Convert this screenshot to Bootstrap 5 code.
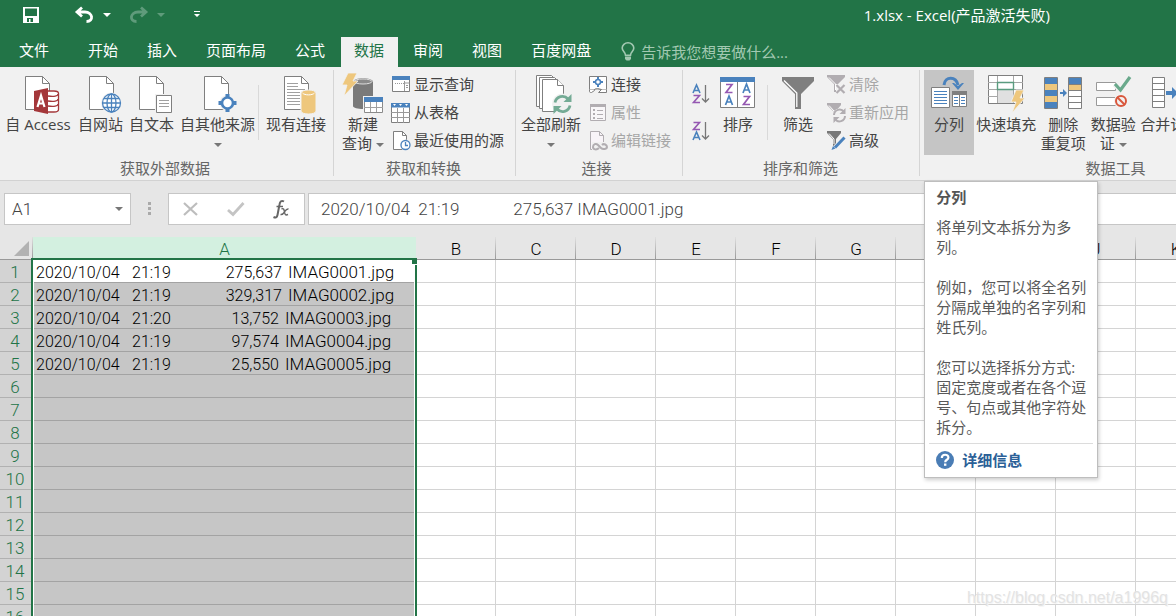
<!DOCTYPE html>
<html lang="zh-CN">
<head>
<meta charset="utf-8">
<meta name="viewport" content="width=device-width, initial-scale=1">
<title>1.xlsx - Excel</title>
<link href="https://cdn.jsdelivr.net/npm/bootstrap@5.3.0/dist/css/bootstrap.min.css" rel="stylesheet">
<style>
  :root { --xl-green:#227447; --xl-cells:Roboto,"Noto Sans CJK SC",sans-serif; }
  body { font-family:"Open Sans","Noto Sans CJK SC",sans-serif; font-size:15px; line-height:20px; color:#444; background:#fff; }
  button { border:0; background:none; padding:0; color:inherit; white-space:nowrap; }
  svg { display:block; flex:none; overflow:visible; }
  .tri { display:inline-block; border:solid transparent; border-width:4px 4px 0; border-top-color:currentColor; height:0; width:0; }

  /* title bar and tabs */
  .xl-head { background:var(--xl-green); color:#fff; }
  .title-row { height:30px; padding:0 126px 0 22px; }
  .title-row .dim { color:#5f9b7b; }
  .qat-undo { margin-left:35px; }
  .qat-list { margin-left:9px; }
  .qat-redo { margin-left:18px; }
  .qat-more { margin-left:28px; }
  .tab-row { height:37px; gap:2px; }
  .xl-tab { display:block; height:30px; line-height:27px; padding:0 14px 0 13px; color:#fff; text-decoration:none; white-space:nowrap; }
  .xl-tab.file { padding:0 24px 0 19px; }
  .xl-tab.active { background:#f1f1f1; color:var(--xl-green); }
  .tell { margin-left:14px; gap:6px; height:30px; padding-bottom:1px; color:#a3c9b2; }
  .tell input { border:0; background:none; padding:0; width:180px; line-height:20px; outline:0; color:#fff; }
  .tell input::placeholder { color:#a3c9b2; opacity:1; }

  /* ribbon */
  .ribbon { background:#f1f1f1; padding:3px 0 4px; border-bottom:1px solid #d2d2d2; }
  .rgroup { border-right:1px solid #d5d5d5; flex:none; }
  .rbody { height:85px; }
  .rlabel { height:21px; line-height:26px; text-align:center; color:#666; }
  .g-data { padding:0 4px 0 1px; }
  .g-get { padding:0 7px 0 5px; }
  .g-conn { padding:0 7px 0 2px; }
  .g-sort { padding:0 6px 0 5px; }
  .g-tools { padding-left:4px; min-width:388px; }
  .big { display:flex; flex-direction:column; align-items:center; min-width:48px; height:85px; padding:4px 3px 0; line-height:19px; }
  .big svg { margin-bottom:-1px; }
  .big.wide { min-width:74px; }
  .g-tools .big { padding:4px 2px 0; min-width:50px; }
  .big .tri { color:#777; vertical-align:middle; }
  .big.on { background:#c5c5c5; }
  .rsep { width:1px; height:55px; margin-top:15px; background:#d9d9d9; }
  .g-sort .rsep { margin-left:5px; margin-right:6px; }
  .small-col { padding-top:1px; }
  .sbtn { display:flex; align-items:center; height:28px; gap:3px; padding:0 4px 2px; }
  .sbtn svg { margin-top:2px; }
  .sbtn:disabled { color:#a6a6a6; }
  .az-col { padding-top:5px; }
  .az { display:flex; align-items:center; height:37px; padding:0 3px; }

  /* tooltip */
  .tip { position:absolute; z-index:5; top:111px; left:0; width:174px; background:#fff; border:1px solid #bebebe; box-shadow:1px 2px 4px rgba(0,0,0,.2); color:#595959; }
  .tip-text { padding:5px 9px 6px 11px; }
  .tip-text h2 { font-size:15px; line-height:20px; font-weight:700; margin:0 0 10px; color:#555; }
  .tip-text p { margin:0 0 20px; white-space:nowrap; }
  .tip-text p:last-child { margin:0; }
  .tip-more { margin:0 4px; padding:6px 7px 7px; border-top:1px solid #dcdcdc; gap:8px; font-weight:700; color:#2b6097; text-decoration:none; }

  /* formula bar */
  .fbar { background:#e6e6e6; padding:12px 0 12px 4px; font-family:var(--xl-cells); font-size:17px; }
  .fbox { height:32px; background:#fff; border:1px solid #c6c6c6; }
  .fbox input { border:0; background:none; padding:0; outline:0; color:#444; line-height:20px; min-width:0; width:100%; font-weight:300; }
  .namebox { width:127px; padding:0 7px; color:#777; }
  .dots { width:37px; color:#aaa; }
  .fbtns { width:137px; margin-right:3px; padding:0 14px; }

  /* grid */
  .sheet { position:relative; overflow:hidden; min-height:0; background:#fff; }
  .cells { table-layout:fixed; border-collapse:separate; border-spacing:0; font-family:var(--xl-cells); font-size:17px; font-weight:300; color:#000; }
  .cells th, .cells td { height:23px; line-height:20px; padding:2px 0 0; border:solid #d4d4d4; border-width:0 1px 1px 0; font-weight:300; overflow:hidden; white-space:nowrap; }
  .cells thead th { background:linear-gradient(#e0e0e0,#999) right/1px 100% no-repeat #e6e6e6; border-right:0; border-bottom-color:#999; text-align:center; }
  .cells thead th.sel { background:#d3f0e0; color:var(--xl-green); }
  .cells tbody th { background:#d3d3d3; border-color:#b1b1b1; color:var(--xl-green); text-align:center; padding-right:2px; }
  .cells td.sel { background:#c6c6c6; border-color:#a3a3a3; padding-left:3px; color:#000; }
  .cells tr:first-child td.sel { background:#fff; }
  .c-rn { width:33px; } .c-a { width:383px; } .c-n { width:80px; }
  .f-date, .f-time, .f-size { display:inline-block; font-size:16px; line-height:18px; }
  .f-date { width:96px; }
  .f-time { width:40px; }
  .f-size { width:110px; text-align:right; margin-right:6px; }
  .f-size.five { width:107px; }
  .range { position:absolute; top:21px; left:31px; width:386px; bottom:-4px; border:2px solid var(--xl-green); box-shadow:inset 0 0 0 1px #fff; pointer-events:none; }
  .range::after { content:""; position:absolute; top:-2px; right:-2px; width:5px; height:6px; background:var(--xl-green); box-shadow:0 1px 0 #fff; }
  .mark-url { position:absolute; right:8px; bottom:8px; font:16px/20px "Liberation Sans",sans-serif; color:#e3e3e3; text-shadow:1px 1px 0 #f6f6f6; pointer-events:none; }
</style>
</head>
<body class="vh-100 overflow-hidden d-flex flex-column">

<header class="xl-head">
  <div class="title-row d-flex align-items-center">
    <button aria-label="保存"><svg width="18" height="18" viewBox="0 0 18 18"><path fill="#fff" fill-rule="evenodd" d="M1 1h16v16H1zM3 2.500h12v7.500H3zM5 12v4h2v-3h1.500v3H11v-4z"/></svg></button>
    <button class="qat-undo" aria-label="撤消"><svg width="19" height="18" viewBox="0 0 19 18"><path fill="none" stroke="#fff" stroke-width="2.800" d="M7 1.500 2 6l5 4.500M2.500 6H10c8 0 9 9.500 1.500 9.500"/></svg></button>
    <button class="qat-list d-flex" aria-label="撤消列表"><span class="tri"></span></button>
    <button class="qat-redo dim" aria-label="重做"><svg width="19" height="18" viewBox="0 0 19 18"><path fill="none" stroke="currentColor" stroke-width="2.800" d="m12 1.500 5 4.500-5 4.500M16.500 6H9C1 6 0 15.500 7.500 15.500"/></svg></button>
    <button class="qat-list dim d-flex" aria-label="重做列表"><span class="tri"></span></button>
    <button class="qat-more" aria-label="自定义快速访问工具栏"><svg width="8" height="8" viewBox="0 0 8 8"><path fill="#fff" d="M1 0h6v1H1zM1 3h6L4 6z"/></svg></button>
    <div class="ms-auto text-nowrap">1.xlsx - Excel(产品激活失败)</div>
  </div>
  <nav class="tab-row d-flex align-items-end">
    <a class="xl-tab file" href="#">文件</a>
    <a class="xl-tab" href="#">开始</a>
    <a class="xl-tab" href="#">插入</a>
    <a class="xl-tab" href="#">页面布局</a>
    <a class="xl-tab" href="#">公式</a>
    <a class="xl-tab active" href="#" aria-current="page">数据</a>
    <a class="xl-tab" href="#">审阅</a>
    <a class="xl-tab" href="#">视图</a>
    <a class="xl-tab" href="#">百度网盘</a>
    <label class="tell d-flex align-items-center">
      <svg width="14" height="19" viewBox="0 0 14 19"><path fill="none" stroke="currentColor" stroke-width="1.600" d="M4.500 13.200C4.500 10 1.200 9.500 1.200 6a5.800 5.200 0 0 1 11.600 0c0 3.500-3.300 4-3.300 7.200z"/><path fill="currentColor" d="M4 14.500h6V17l-1.500 1.500h-3L4 17z"/></svg>
      <input type="text" placeholder="告诉我您想要做什么..." aria-label="告诉我您想要做什么">
    </label>
  </nav>
</header>

<section class="ribbon d-flex">
  <div class="rgroup g-data">
    <div class="rbody d-flex">
      <button class="big wide">
        <svg width="42" height="42"><path d="M8.500 2.500h17l7 7v26h-24z" fill="#fff" stroke="#7f7f7f"/><path d="M25.500 2.500v7h7" fill="none" stroke="#7f7f7f"/><path d="M30 17h7c3 0 4.500 1 4.500 2.500v16c0 1.500-2 2.500-4.500 2.500h-7z" fill="#fff" stroke="#a4373a" stroke-width="1.300"/><path d="M31 22c6 1 10 0 10-2M31 27c6 1 10 0 10-2M31 32c6 1 10 0 10-2" fill="none" stroke="#a4373a" stroke-width="1.300"/><path d="M17 17l14-3v26l-14-3z" fill="#a4373a"/><path d="M20.500 33 24 21.500l3.500 11.500M21.700 29.500h4.600" fill="none" stroke="#fff" stroke-width="2.200"/></svg>
        <span>自 Access</span>
      </button>
      <button class="big">
        <svg width="42" height="42"><path d="M9.500 2.500h17l7 7v26h-24z" fill="#fff" stroke="#7f7f7f"/><path d="M26.500 2.500v7h7" fill="none" stroke="#7f7f7f"/><circle cx="31.500" cy="29" r="10.500" fill="#f1f1f1"/><g fill="#fff" stroke="#4a82bd" stroke-width="1.300"><circle cx="31.500" cy="29" r="9"/><ellipse cx="31.500" cy="29" rx="4.500" ry="9"/><path d="M31.500 20v18M22.500 29h18M24 24.500h15M24 33.500h15"/></g></svg>
        <span>自网站</span>
      </button>
      <button class="big">
        <svg width="42" height="42"><path d="M8.500 2.500h17l7 7v26h-24z" fill="#fff" stroke="#7f7f7f"/><path d="M25.500 2.500v7h7" fill="none" stroke="#7f7f7f"/><path d="M24 20h17v20H24z" fill="#f1f1f1"/><path d="M25.500 21.500h15v17h-15z" fill="#fff" stroke="#7f7f7f"/><path d="M28 26.500h10M28 29.500h10M28 32.500h10" stroke="#a0a0a0"/></svg>
        <span>自文本</span>
      </button>
      <button class="big">
        <svg width="42" height="42"><path d="M7.500 2.500h17l7 7v26h-24z" fill="#fff" stroke="#7f7f7f"/><path d="M24.500 2.500v7h7" fill="none" stroke="#7f7f7f"/><circle cx="30.500" cy="29" r="8" fill="#f1f1f1"/><circle cx="30.500" cy="29" r="5.500" fill="#fff" stroke="#4a82bd" stroke-width="2.600"/><path d="M28.500 20h4v4h-4zM28.500 34h4v4h-4zM21.500 27h4v4h-4zM35.500 27h4v4h-4z" fill="#4a82bd"/></svg>
        <span>自其他来源</span><span><i class="tri"></i></span>
      </button>
      <div class="rsep me-1"></div>
      <button class="big">
        <svg width="42" height="42"><path d="M9.500 2.500h17l7 7v26h-24z" fill="#fff" stroke="#7f7f7f"/><path d="M26.500 2.500v7h7" fill="none" stroke="#7f7f7f"/><path d="M12 9.500h11M12 12.500h11M12 15.500h18M12 18.500h13M12 21.500h13M12 24.500h13M12 27.500h13M12 30.500h13" stroke="#a0a0a0"/><path d="M26 19c0-4 15-4 15 0v18c0 4-15 4-15 0z" fill="#eec77d" stroke="#f1f1f1" stroke-width="1"/><path d="M27.500 19c2 2.500 10 2.500 12 0" fill="none" stroke="#fff"/></svg>
        <span>现有连接</span>
      </button>
    </div>
    <div class="rlabel">获取外部数据</div>
  </div>

  <div class="rgroup g-get">
    <div class="rbody d-flex">
      <button class="big">
        <svg width="42" height="42"><path d="M11 8c0-5 20-5 20 0v24c0 4-20 4-20 0z" fill="#7a7a7a"/><ellipse cx="21" cy="7.500" rx="9" ry="2.500" fill="#8a8a8a" stroke="#ddd"/><path d="M6-1h9l-4 8h5L2 22l3-11H0z" fill="#eec77d" stroke="#f1f1f1" stroke-width=".8"/><path d="M21 22h21v18H21z" fill="#f1f1f1"/><path d="M22.500 23.500h18v15h-18z" fill="#fff" stroke="#8a8a8a"/><path d="M22 23h19v5H22z" fill="#4a82bd"/><path d="M22 33.500h19M28.500 28v10M34.500 28v10" stroke="#a0a0a0"/></svg>
        <span>新建<br>查询 <i class="tri"></i></span>
      </button>
      <div class="small-col">
        <button class="sbtn"><svg width="20" height="20"><path d="M1.500 2.500h17v14h-17z" fill="#fff" stroke="#7f7f7f"/><path d="M1 1h18v4H1z" fill="#4a82bd"/><path d="M4 8.500h9" stroke="#999" stroke-dasharray="1 1"/><path d="M13.500 8h5M13.500 6v10" stroke="#999"/><path d="M15 10h2v1h-2zM15 12h2v1h-2z" fill="#999"/></svg>显示查询</button>
        <button class="sbtn"><svg width="20" height="20"><path d="M.5 2.500h18v17H.5z" fill="#fff" stroke="#7f7f7f"/><path d="M0 0h19v4.500H0z" fill="#4a82bd"/><path d="M2 1h3L3.500 3zM8 1h3L9.500 3zM14 1h3l-1.500 2z" fill="#fff"/><path d="M0 9.500h19M0 14.500h19M6.500 5v15M12.500 5v15" stroke="#999"/></svg>从表格</button>
        <button class="sbtn"><svg width="20" height="20"><path d="M2.500.5h9l4 4v14h-13z" fill="#fff" stroke="#7f7f7f"/><path d="M11.500.5v4h4" fill="none" stroke="#7f7f7f"/><circle cx="14.500" cy="14" r="5.500" fill="#f1f1f1"/><circle cx="14.500" cy="14" r="4.500" fill="#fff" stroke="#4a82bd" stroke-width="1.300"/><path d="M14.500 11v3.500h2.500" fill="none" stroke="#4a82bd" stroke-width="1.300"/></svg>最近使用的源</button>
      </div>
    </div>
    <div class="rlabel">获取和转换</div>
  </div>

  <div class="rgroup g-conn">
    <div class="rbody d-flex">
      <button class="big">
        <svg width="42" height="42"><g fill="#fff" stroke="#7f7f7f"><path d="M6.500 1.500h15l6 6v25h-21z"/><path d="M9.500 3.500h15l6 6v25h-21z"/><path d="M12.500 5.500h15l6 6v26h-21z"/><path d="M27.500 5.500v6h6"/></g><circle cx="32.500" cy="30" r="10.500" fill="#f1f1f1"/><path d="M25 28.500a7.500 7.500 0 0 1 13-3.500M40 31.500a7.500 7.500 0 0 1-13 3.500" fill="none" stroke="#74ab95" stroke-width="2.800"/><path d="M41.500 20v8h-8zM23.500 40v-8h8z" fill="#74ab95"/></svg>
        <span>全部刷新</span><span><i class="tri"></i></span>
      </button>
      <div class="small-col">
        <button class="sbtn"><svg width="20" height="20"><path d="M1.500 1.500h17v13h-17z" fill="#fff" stroke="#7f7f7f"/><path d="M1.500 14.500v2c0 1 1 1 2 1l3-2c-1-1 1-2 3-2l4 1-3 3h8v-3" fill="#fff" stroke="#7f7f7f"/><circle cx="10" cy="7" r="2.500" fill="none" stroke="#4a82bd" stroke-width="1.500"/><path d="M9 2h2v2H9zM9 10h2v2H9zM5 6h2v2H5zM13 6h2v2h-2z" fill="#4a82bd"/></svg>连接</button>
        <button class="sbtn" disabled><svg width="20" height="20"><path d="M2.500 1.500h15v16h-15z" fill="#f8f6f8" stroke="#b1adb1"/><path d="M2 1h16v3H2z" fill="#b1adb1"/><path d="M5 6h2v2H5zM5 10h2v2H5zM5 14h2v2H5z" fill="#b1adb1"/><path d="M9 7.500h6M9 11.500h6M9 15.500h6" stroke="#b1adb1"/></svg>属性</button>
        <button class="sbtn" disabled><svg width="20" height="20"><path d="M2.500.5h9l4 4v14h-13z" fill="#f8f4f8" stroke="#b1adb1"/><path d="M11.500.5v4h4" fill="none" stroke="#b1adb1"/><path d="M4 11h16v8H4z" fill="#f1f1f1"/><path d="M11 17c-2 2-6 2-6-1s3-4 5-2l3 3c2 2 6 1 6-1s-3-4-5-2" fill="none" stroke="#b1adb1" stroke-width="2"/></svg>编辑链接</button>
      </div>
    </div>
    <div class="rlabel">连接</div>
  </div>

  <div class="rgroup g-sort">
    <div class="rbody d-flex">
      <div class="az-col">
        <button class="az" aria-label="升序"><svg width="20" height="20"><g fill="none" stroke-width="1.600"><path d="M2 9 5.500 1 9 9M3.200 6.500h4.600" stroke="#4a82bd"/><path d="M2.500 11.500h6l-6 7h6.500" stroke="#9558b2"/><path d="M14.500 1v17M11 14.500l3.500 3.500 3.500-3.500" stroke="#777" stroke-width="1.300"/></g></svg></button>
        <button class="az" aria-label="降序"><svg width="20" height="20"><g fill="none" stroke-width="1.600"><path d="M2.500 1.500h6l-6 7h6.500" stroke="#9558b2"/><path d="M2 19 5.500 11 9 19M3.200 16.500h4.600" stroke="#4a82bd"/><path d="M14.500 1v17M11 14.500l3.500 3.500 3.500-3.500" stroke="#777" stroke-width="1.300"/></g></svg></button>
      </div>
      <button class="big">
        <svg width="42" height="42"><path d="M3.500 4.500h34v29h-34z" fill="#fff" stroke="#7f7f7f"/><path d="M3 3h35v5H3z" fill="#4a82bd"/><path d="M20.500 8v26" stroke="#7f7f7f"/><g fill="none" stroke-width="1.700"><path d="M9 10.500h6l-6 8h6.500M26.500 22.500h6l-6 8h6.500" stroke="#9558b2"/><path d="m8.500 31 3.500-9 3.500 9M9.700 28h4.600M26 19l3.500-9 3.500 9M27.200 16h4.600" stroke="#4a82bd"/></g></svg>
        <span>排序</span>
      </button>
      <div class="rsep"></div>
      <button class="big">
        <svg width="42" height="42"><path d="M5 3h32v4L24 20v15h-6V20L5 7z" fill="#7f7f7f"/><path d="M7 6.500 19.800 19v14" fill="none" stroke="#fff" stroke-width="1.300"/></svg>
        <span>筛选</span>
      </button>
      <div class="small-col">
        <button class="sbtn" disabled><svg width="20" height="20"><path d="M1 0h18v2l-7 7v8H8V9L1 2z" fill="#b1adb1"/><path d="M3 2.500 9.500 9v6" fill="none" stroke="#fff"/><path d="M10 9h9v10h-9z" fill="#f1f1f1"/><path d="m10.500 10 8 8M18.500 10l-8 8" stroke="#b1adb1" stroke-width="2.200"/></svg>清除</button>
        <button class="sbtn" disabled><svg width="20" height="20"><path d="M1 0h14v2l-5 6v7H7V8L1 2z" fill="#b1adb1"/><path d="M3 2.500 8 8v5" fill="none" stroke="#fff"/><circle cx="13.500" cy="12.500" r="7" fill="#f1f1f1"/><path d="M8 12a5.500 5.500 0 0 1 10-3M19 13a5.500 5.500 0 0 1-10 3" fill="none" stroke="#b1adb1" stroke-width="2"/><path d="M19.500 5v6h-6zM7.500 20v-6h6z" fill="#b1adb1"/></svg>重新应用</button>
        <button class="sbtn"><svg width="20" height="20"><path d="M1 0h14v2l-5 6v7H7V8L1 2z" fill="#777"/><path d="M3 2.500 8 8v5" fill="none" stroke="#fff"/><path d="M18 7 8 18" stroke="#f1f1f1" stroke-width="5"/><path d="M18.500 6.500 9 16.500" stroke="#4a82bd" stroke-width="3"/><path d="m7 15 2.500 2.500L5.500 19z" fill="#4a82bd"/></svg>高级</button>
      </div>
    </div>
    <div class="rlabel">排序和筛选</div>
  </div>

  <div class="rgroup g-tools">
    <div class="rbody d-flex">
      <div class="position-relative">
        <button class="big on" aria-describedby="tip">
          <svg width="42" height="42"><path d="M3.500 13.500h18v20h-18z" fill="#fff" stroke="#7f7f7f"/><path d="M6 17.500h13M6 20.500h13M6 23.500h13M6 26.500h13M6 29.500h13" stroke="#4a82bd" stroke-width="1.200"/><path d="M24.500 17.500h14v15h-14z" fill="#fff" stroke="#7f7f7f"/><path d="M24 17h15v4H24z" fill="#7f7f7f"/><path d="M31.500 20v13" stroke="#7f7f7f"/><path d="M26 23.500h4M33 23.500h4M26 26.500h4M33 26.500h4M26 29.500h4M33 29.500h4" stroke="#4a82bd"/><path d="M16 11c1-9 12-9 14 0" fill="none" stroke="#4a82bd" stroke-width="3"/><path d="M24 9h2l4 3 4-3h2l-6 7z" fill="#4a82bd"/></svg>
          <span>分列</span>
        </button>
        <div class="tip" id="tip" role="tooltip">
          <div class="tip-text">
            <h2>分列</h2>
            <p>将单列文本拆分为多<br>列。</p>
            <p>例如，您可以将全名列<br>分隔成单独的名字列和<br>姓氏列。</p>
            <p>您可以选择拆分方式:<br>固定宽度或者在各个逗<br>号、句点或其他字符处<br>拆分。</p>
          </div>
          <a href="#" class="tip-more d-flex align-items-center">
            <svg width="18" height="18"><circle cx="9" cy="9" r="9" fill="#4a7db5"/><path d="M5.800 7c0-4.300 6.600-4.200 6.600-.6 0 2.400-3.200 2.300-3.200 4.800" fill="none" stroke="#fff" stroke-width="2.200"/><path d="M8 12.500h2.400v2.300H8z" fill="#fff"/></svg>
            详细信息
          </a>
        </div>
      </div>
      <button class="big">
        <svg width="42" height="42"><path d="M3.500 1.500h34v28h-34z" fill="#fff" stroke="#7f7f7f"/><path d="M12 16h17v13H12z" fill="#e0e0e0"/><path d="M3 8.500h35M3 15.500h35M3 22.500h9M12.500 2v27M28.500 2v27" stroke="#a8a8a8"/><path d="M12.500 8.500h16v7h-16z" fill="#fff" stroke="#5a9c80" stroke-width="1.400"/><path d="M31 16h8l-4 8h5L27 39l4-11h-5z" fill="#eec77d" stroke="#f1f1f1" stroke-width=".8"/></svg>
        <span>快速填充</span>
      </button>
      <button class="big">
        <svg width="42" height="42"><path d="M2.500 3.500h13v31h-13zM26.500 3.500h13v31h-13z" fill="#fff"/><path d="M3 4h12v6H3zM3 16h12v6H3zM3 28h12v6H3zM27 4h12v6H27z" fill="#4a82bd"/><path d="M3 10h12v6H3zM3 22h12v6H3zM27 10h12v6H27z" fill="#eec77d"/><path d="M2.500 3.500h13v31h-13zM26.500 3.500h13v31h-13zM26.500 10.500h13M26.500 16.500h13M26.500 22.500h13M26.500 28.500h13" fill="none" stroke="#7f7f7f"/><path d="M18 18h3v-3l4 4-4 4v-3h-3z" fill="#4a82bd"/></svg>
        <span>删除<br>重复项</span>
      </button>
      <button class="big">
        <svg width="42" height="42"><path d="M4.500 8.500h19v8h-19zM4.500 23.500h19v8h-19z" fill="#fff" stroke="#999"/><path d="m23 10 5.500 6L38 4" fill="none" stroke="#f1f1f1" stroke-width="6"/><path d="m23 10 5.500 6L38 3" fill="none" stroke="#6aa98c" stroke-width="3.200"/><circle cx="29" cy="27" r="7" fill="#f1f1f1"/><path d="m25 23 8 8" stroke="#d9573c" stroke-width="2"/><circle cx="29" cy="27" r="5" fill="none" stroke="#d9573c" stroke-width="2"/></svg>
        <span>数据验<br>证 <i class="tri"></i></span>
      </button>
      <button class="big">
        <svg width="42" height="42"><path d="M3.500 3.500h12v30h-12zM3.500 9.500h12M3.500 15.500h12M3.500 21.500h12M3.500 27.500h12" fill="#fff" stroke="#7f7f7f"/><path d="M17 17h6v-4l6 6-6 6v-4h-6z" fill="#4a82bd"/></svg>
        <span>合并计算</span>
      </button>
    </div>
    <div class="rlabel">数据工具</div>
  </div>
</section>

<section class="fbar d-flex">
  <div class="fbox namebox d-flex align-items-center flex-shrink-0">
    <input type="text" value="A1" aria-label="名称框">
    <button class="d-flex" aria-label="名称列表"><span class="tri"></span></button>
  </div>
  <div class="dots d-flex align-items-center justify-content-center flex-shrink-0"><svg width="4" height="14"><path fill="currentColor" d="M0 0h3v3H0zM0 5h3v3H0zM0 10h3v3H0z"/></svg></div>
  <div class="fbox fbtns d-flex align-items-center justify-content-between flex-shrink-0">
    <button aria-label="取消"><svg width="16" height="16"><path d="m1 2 13 12M14 2 1 14" stroke="#bdbdbd" stroke-width="2.200"/></svg></button>
    <button aria-label="输入"><svg width="18" height="16"><path d="m1 9 5 4.500L16.500 2" fill="none" stroke="#c4c4c4" stroke-width="2.800"/></svg></button>
    <button aria-label="插入函数"><svg width="18" height="20"><g fill="none" stroke="#666"><path stroke-width="2" d="M12 2.500c-2.500-1.500-4 0-4.500 3L5.500 16c-.5 2.500-2 3-4 2"/><path stroke-width="1.400" d="M4.500 7.500H11M9.500 10c2-1 2.500 0 3 3s1 3.500 3.500 2.500M16.500 10c-2-.5-3 1.500-4 3s-2 3-4 2.500"/></g></svg></button>
  </div>
  <div class="fbox flex-grow-1 d-flex align-items-center border-end-0 px-2">
    <input class="ms-1" type="text" aria-label="编辑栏" value="2020/10/04  21:19             275,637 IMAG0001.jpg">
  </div>
</section>

<main class="sheet flex-grow-1">
  <table class="cells">
    <colgroup id="cols"><col class="c-rn"><col class="c-a"></colgroup>
    <thead><tr id="letters"><th scope="col" aria-label="全选"><svg width="32" height="20"><path d="M29 2v15H14z" fill="#b2b2b2"/></svg></th></tr></thead>
    <tbody id="rows"></tbody>
  </table>
  <div class="range"></div>
  <div class="mark-url">https://blog.csdn.net/a1996q</div>
</main>

<script src="https://cdn.jsdelivr.net/npm/bootstrap@5.3.0/dist/js/bootstrap.bundle.min.js"></script>
<script>
  const files = [
    ['2020/10/04', '21:19', '275,637', 'IMAG0001.jpg'],
    ['2020/10/04', '21:19', '329,317', 'IMAG0002.jpg'],
    ['2020/10/04', '21:20', '13,752', 'IMAG0003.jpg'],
    ['2020/10/04', '21:19', '97,574', 'IMAG0004.jpg'],
    ['2020/10/04', '21:19', '25,550', 'IMAG0005.jpg']
  ];
  const letters = [...'ABCDEFGHIJKLMNOPQRSTUVWXYZ'];
  const rowCount = 50;
  document.querySelector('.cells').style.width = 416 + 80 * (letters.length - 1) + 'px';
  document.getElementById('cols').insertAdjacentHTML('beforeend', '<col class="c-n">'.repeat(letters.length - 1));
  document.getElementById('letters').insertAdjacentHTML('beforeend',
    letters.map((l, i) => `<th scope="col"${i ? '' : ' class="sel"'}>${l}</th>`).join(''));
  let html = '';
  for (let r = 0; r < rowCount; r++) {
    const f = files[r];
    const text = f ? `<span class="f-date">${f[0]}</span><span class="f-time">${f[1]}</span><span class="f-size${f[2].length < 7 ? ' five' : ''}">${f[2]}</span>${f[3]}` : '';
    html += `<tr><th scope="row">${r + 1}</th><td class="sel">${text}</td>${'<td></td>'.repeat(letters.length - 1)}</tr>`;
  }
  document.getElementById('rows').innerHTML = html;
</script>
</body>
</html>
